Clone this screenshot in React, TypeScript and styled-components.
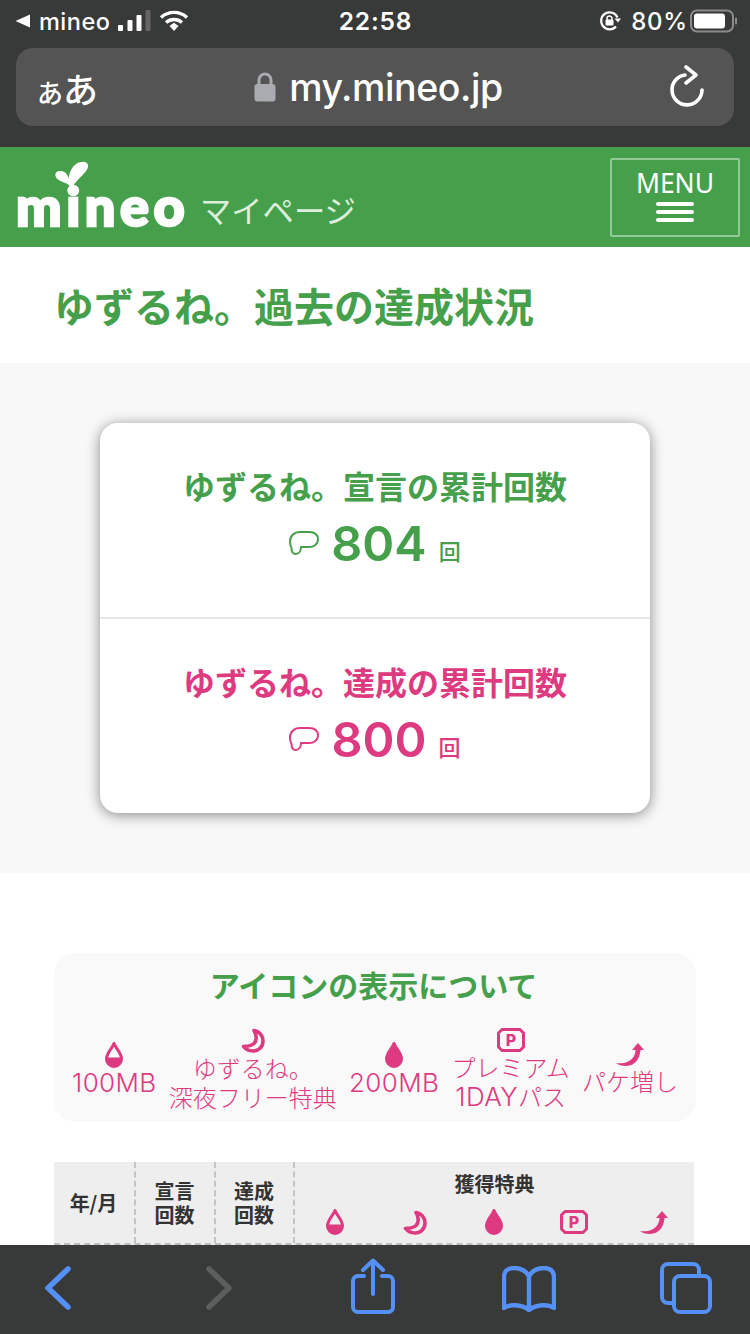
import React from "react";
import styled, { createGlobalStyle } from "styled-components";

const GREEN = "#46a04b";
const PINK = "#dd3a80";
const DARK = "#383939";
const BLUE = "#5591f5";
const JP = `"Noto Sans CJK JP", "Noto Sans", sans-serif`;
const LATIN = `Inter, "Noto Sans CJK JP", sans-serif`;

const Global = createGlobalStyle`
  html, body { margin: 0; padding: 0; background: #fff; }
  body { font-family: ${JP}; width: 750px; height: 1334px; overflow: hidden; }
  * { box-sizing: border-box; }
`;

const Page = styled.div`
  width: 750px;
  height: 1334px;
  overflow: hidden;
`;
const Chrome = styled.div`
  background: ${DARK};
  height: 147px;
  color: #fff;
`;
const StatusBar = styled.div`
  height: 48px;
  padding: 0 12px 6px 15px;
  display: flex;
  align-items: center;
  justify-content: space-between;
  font-family: ${LATIN};
`;
const StatusSide = styled.div<{ $end?: boolean }>`
  flex: 1;
  display: flex;
  align-items: center;
  justify-content: ${(p) => (p.$end ? "flex-end" : "flex-start")};
  gap: 8px;
`;
const Carrier = styled.span`
  font-size: 23.5px;
  font-weight: 500;
  letter-spacing: 0.5px;
`;
const Clock = styled.span`
  font-size: 24.5px;
  font-weight: 600;
  letter-spacing: 0.8px;
  margin-left: -2px;
`;
const Percent = styled.span`
  font-size: 24px;
  font-weight: 500;
  letter-spacing: 0.8px;
  margin: 0 -6px 0 2px;
`;
const AddressBar = styled.div`
  margin: 0 16px;
  height: 78px;
  background: #535453;
  border-radius: 17px;
  display: flex;
  align-items: center;
  justify-content: space-between;
  padding: 0 29px 0 21px;
`;
const TextSize = styled.span`
  font-family: ${JP};
  font-size: 35px;
  font-weight: 500;
  display: flex;
  align-items: baseline;
  color: #fff;
  small { font-size: 26px; font-weight: 500; }
`;
const Url = styled.div`
  display: flex;
  align-items: center;
  gap: 13px;
  font-family: ${LATIN};
  font-size: 37.5px;
  font-weight: 500;
  letter-spacing: -0.4px;
  color: #fff;
  margin-right: 10px;
`;
const Header = styled.header`
  height: 100px;
  background: ${GREEN};
  display: flex;
  justify-content: space-between;
  padding: 11px 10px 0 16px;
`;
const Brand = styled.div`
  display: flex;
  align-items: flex-end;
  gap: 16px;
  height: 74px;
`;
const Logo = styled.div`
  position: relative;
  width: 168px;
  height: 48px;
  margin-bottom: 3px;
  display: flex;
  align-items: flex-end;
  color: #fff;
  font-family: Lato, Inter, sans-serif;
  font-size: 54px;
  font-weight: 900;
  line-height: 46px;
  letter-spacing: 4.6px;
  -webkit-text-stroke: 2.5px #fff;
`;
const Sprout = styled.svg`
  position: absolute;
  left: 38px;
  top: -21px;
`;
const MyPage = styled.span`
  font-size: 31.3px;
  font-weight: 400;
  line-height: 42px;
  color: #dcefdc;
  margin-bottom: 1px;
`;
const MenuButton = styled.div`
  width: 130px;
  height: 79px;
  border: 2px solid #93ca95;
  border-radius: 2px;
  color: #fff;
  display: flex;
  flex-direction: column;
  align-items: center;
  padding-top: 6px;
`;
const MenuLabel = styled.span`
  font-family: "Noto Sans", sans-serif;
  font-size: 26.5px;
  line-height: 34px;
  letter-spacing: -0.1px;
`;
const Burger = styled.div`
  margin-top: 2px;
  display: flex;
  flex-direction: column;
  gap: 4px;
`;
const BurgerLine = styled.i`
  display: block;
  width: 38px;
  height: 4px;
  border-radius: 2px;
  background: #fff;
`;
const PageTitle = styled.h1`
  margin: 0;
  height: 116px;
  display: flex;
  align-items: center;
  padding: 0 0 0 54px;
  font-size: 40px;
  font-weight: 700;
  color: ${GREEN};
`;
const Band = styled.section`
  height: 510px;
  background: #f8f8f8;
  padding-top: 60px;
`;
const Card = styled.div`
  width: 550px;
  height: 390px;
  margin: 0 auto;
  background: #fff;
  border-radius: 18px;
  box-shadow: 0 2px 14px rgba(0, 0, 0, 0.45);
  overflow: hidden;
`;
const Tally = styled.div<{ $color: string; $divided?: boolean }>`
  height: ${(p) => (p.$divided ? 196 : 194)}px;
  padding-top: 42px;
  color: ${(p) => p.$color};
  display: flex;
  flex-direction: column;
  align-items: center;
  gap: 8px;
  border-bottom: ${(p) => (p.$divided ? "2px solid #e6e6e6" : "none")};
`;
const TallyLabel = styled.div`
  font-size: 32px;
  font-weight: 700;
  line-height: 40px;
`;
const TallyValue = styled.div`
  display: flex;
  align-items: center;
  height: 60px;
`;
const TallyNumber = styled.span`
  font-family: ${LATIN};
  font-size: 48.5px;
  font-weight: 600;
  margin: 0 12px 0 12px;
`;
const TallyUnit = styled.span`
  font-size: 22px;
  font-weight: 500;
  margin-top: 14px;
`;
const Legend = styled.section`
  width: 642px;
  height: 169px;
  margin: 80px 0 0 54px;
  padding: 11px 18px 0;
  background: #f9f9f9;
  border-radius: 22px;
`;
const LegendTitle = styled.h2`
  margin: 0 0 23px;
  padding-right: 3px;
  font-size: 30px;
  font-weight: 700;
  line-height: 40px;
  text-align: center;
  color: ${GREEN};
`;
const LegendRow = styled.div`
  display: flex;
  align-items: center;
  justify-content: space-between;
  height: 84px;
`;
const LegendItem = styled.div`
  display: flex;
  flex-direction: column;
  align-items: center;
  color: ${PINK};
  font-family: ${JP};
  font-size: 24px;
  font-weight: 300;
  line-height: 29px;
  text-align: center;
`;
const LegendText = styled.span`
  display: block;
`;
const LegendLatin = styled.span`
  font-family: ${LATIN};
  font-size: 26px;
  letter-spacing: 0.4px;
`;
const Table = styled.div`
  width: 640px;
  height: 83px;
  margin: 40px 0 0 54px;
  background: #eee;
  display: grid;
  grid-template-columns: 82px 80px 79px 399px;
  border-bottom: 2px dashed #bdbdbd;
  color: #333;
  font-size: 20px;
  font-weight: 700;
  line-height: 24px;
`;
const HeadCell = styled.div`
  display: flex;
  flex-direction: column;
  align-items: center;
  justify-content: center;
  padding-right: 1px;
  text-align: center;
  border-right: 2px dashed #c4c4c4;
`;
const BenefitCell = styled.div`
  display: flex;
  flex-direction: column;
  align-items: center;
  padding-top: 10px;
`;
const BenefitIcons = styled.div`
  width: 100%;
  margin-top: 11px;
  display: grid;
  grid-template-columns: repeat(5, 1fr);
  justify-items: center;
  align-items: center;
  height: 30px;
`;
const Toolbar = styled.nav`
  position: fixed;
  left: 0;
  bottom: 0;
  width: 750px;
  height: 89px;
  background: ${DARK};
  display: grid;
  grid-template-columns: 116px 206px 102px 210px 104px;
  justify-items: center;
  align-items: start;
`;
const ToolButton = styled.div<{ $top: number }>`
  margin-top: ${(p) => p.$top}px;
  display: flex;
`;

const Drop = ({ half, size = 26 }: { half?: boolean; size?: number }) => (
  <svg width={(size * 18) / 26} height={size} viewBox="0 0 18 26">
    <path
      d="M9 1.5C7.6 6 1.5 10.5 1.5 17A7.5 7.5 0 0 0 16.5 17C16.5 10.5 10.4 6 9 1.5Z"
      fill={half ? "none" : PINK}
      stroke={PINK}
      strokeWidth="3"
      strokeLinejoin="round"
    />
    {half && <path d="M1.1 15.5H16.9A8 8 0 1 1 1.1 15.5Z" fill={PINK} />}
  </svg>
);
const Moon = () => (
  <svg width="24" height="25" viewBox="0 0 24 25">
    <path
      d="M13 2.500C18 3 22 7.500 22 13C22 19 17.500 23 12 23C8 23 4.500 21 2.500 18.500C3.500 18 9 19 13 15.500C16 12.500 16 7 13 2.500Z"
      fill="none"
      stroke={PINK}
      strokeWidth="3.600"
      strokeLinejoin="round"
    />
  </svg>
);
const Ticket = () => (
  <svg width="28" height="24" viewBox="0 0 28 24">
    <path
      d="M5 1.500H23L26.500 5V19L23 22.500H5L1.500 19V5Z"
      fill="none"
      stroke={PINK}
      strokeWidth="3"
      strokeLinejoin="round"
    />
    <text x="14" y="18" textAnchor="middle" fontFamily="Inter, sans-serif" fontWeight="800" fontSize="16" fill={PINK}>
      P
    </text>
  </svg>
);
const Swoosh = () => (
  <svg width="28" height="23" viewBox="0 0 28 23">
    <path
      d="M22 0L28 7H24.500C24 14 20 23 10 23C6 23 2 22 0 20C6 21 14 20 18 13C19 11 19.500 9 19.500 7H16Z"
      fill={PINK}
    />
  </svg>
);
const Bubble = () => (
  <svg width="30" height="24" viewBox="0 0 30 24">
    <path
      d="M11 1H20C26 1 29 4 29 8.500C29 13 25 16 20 16H12C12 20 10 23 6.500 23C3.500 23 2.500 20 2.500 17C1.500 15 1 13 1 10.500C1 5 5 1 11 1Z"
      fill="none"
      stroke="currentColor"
      strokeWidth="2"
      strokeLinejoin="round"
    />
  </svg>
);

const StatusIcons = {
  Back: () => (
    <svg width="16" height="14" viewBox="0 0 16 14">
      <path d="M15 0.500V13.500L0.500 7Z" fill="#fff" />
    </svg>
  ),
  Signal: () => (
    <svg width="33" height="22" viewBox="0 0 33 22">
      <rect x="0" y="15" width="5" height="6" rx="1" fill="#fff" />
      <rect x="9.500" y="10" width="5" height="11" rx="1" fill="#fff" />
      <rect x="18.500" y="5" width="5" height="16" rx="1" fill="#fff" />
      <rect x="27.500" y="0" width="5" height="21" rx="1" fill="#666" />
    </svg>
  ),
  Wifi: () => (
    <svg width="30" height="22" viewBox="0 0 30 22">
      <path d="M2 7.500C9.500 0.700 20.500 0.700 28 7.500" fill="none" stroke="#fff" strokeWidth="3.400" />
      <path d="M7 12.500C11.500 8.500 18.500 8.500 23 12.500" fill="none" stroke="#fff" strokeWidth="3.400" />
      <path d="M10.500 16L15 12.800L19.500 16L15 21Z" fill="#fff" />
    </svg>
  ),
  Rotation: () => (
    <svg width="22" height="22" viewBox="0 0 22 22">
      <path d="M17 16.500A8.500 8.500 0 1 1 18.500 7.500" fill="none" stroke="#fff" strokeWidth="2.200" />
      <path d="M15.500 8.500H22L19 12.500Z" fill="#fff" />
      <rect x="6.500" y="9.500" width="8" height="6" rx="1" fill="#fff" />
      <path d="M8 10V8.500A2.500 2.500 0 0 1 13 8.500V10" fill="none" stroke="#fff" strokeWidth="1.500" />
    </svg>
  ),
  Battery: () => (
    <svg width="48" height="24" viewBox="0 0 48 24">
      <rect x="1" y="1.500" width="42" height="21" rx="6" fill="none" stroke="#8a8a8a" strokeWidth="2" />
      <rect x="4" y="4.500" width="31" height="15" rx="3" fill="#fff" />
      <rect x="45" y="8.500" width="2" height="7" rx="1" fill="#8a8a8a" />
    </svg>
  ),
};

const Lock = () => (
  <svg width="22" height="30" viewBox="0 0 22 30">
    <path d="M5 13V8A6 6 0 0 1 17 8V13" fill="none" stroke="#a9abb0" strokeWidth="3" />
    <rect x="0.500" y="12" width="21" height="17.500" rx="3" fill="#a9abb0" />
  </svg>
);
const Reload = () => (
  <svg width="36" height="44" viewBox="0 0 36 44">
    <path d="M16 10A15 15 0 1 0 33 25" fill="none" stroke="#fff" strokeWidth="3.600" strokeLinecap="round" />
    <path d="M17 2L27 10L17 18" fill="none" stroke="#fff" strokeWidth="3.600" strokeLinecap="round" strokeLinejoin="round" />
  </svg>
);

const Tool = {
  Back: () => (
    <svg width="28" height="46" viewBox="0 0 28 46">
      <path d="M24 4L4 23L24 42" fill="none" stroke={BLUE} strokeWidth="5.500" strokeLinecap="round" strokeLinejoin="round" />
    </svg>
  ),
  Forward: () => (
    <svg width="28" height="46" viewBox="0 0 28 46">
      <path d="M4 4L24 23L4 42" fill="none" stroke="#5c5d5d" strokeWidth="5.500" strokeLinecap="round" strokeLinejoin="round" />
    </svg>
  ),
  Share: () => (
    <svg width="44" height="56" viewBox="0 0 44 56">
      <path d="M13 18H7A5 5 0 0 0 2 23V49A5 5 0 0 0 7 54H37A5 5 0 0 0 42 49V23A5 5 0 0 0 37 18H31" fill="none" stroke={BLUE} strokeWidth="4" strokeLinecap="round" />
      <path d="M22 36V3M12 12L22 2.500L32 12" fill="none" stroke={BLUE} strokeWidth="4" strokeLinecap="round" strokeLinejoin="round" />
    </svg>
  ),
  Book: () => (
    <svg width="54" height="46" viewBox="0 0 54 46">
      <path
        d="M27 10C24 5 19 2 12 2C6 2 2 5 2 11V42C8 38 19 38 27 44C35 38 46 38 52 42V11C52 5 48 2 42 2C35 2 30 5 27 10ZM27 10V42"
        fill="none"
        stroke={BLUE}
        strokeWidth="4.400"
        strokeLinejoin="round"
      />
    </svg>
  ),
  Tabs: () => (
    <svg width="52" height="52" viewBox="0 0 52 52">
      <path d="M12 41H8A6 6 0 0 1 2 35V8A6 6 0 0 1 8 2H33A6 6 0 0 1 39 8V14" fill="none" stroke={BLUE} strokeWidth="4" />
      <rect x="14" y="14" width="36" height="36" rx="6" fill="none" stroke={BLUE} strokeWidth="4" />
    </svg>
  ),
};

const Sprig = () => (
  <Sprout width="36" height="30" viewBox="0 0 36 30">
    <path d="M16 26C13 22 3 22 1.500 16C0.500 12 5 10 9 11.500C14 13 16 20 16 26Z" fill="#fff" />
    <path d="M17 29C13 22 14 10 22 4C27 1 33 1 34 5C35 12 24 17 17 29Z" fill="#fff" />
  </Sprout>
);

export default function App() {
  return (
    <Page>
      <Global />
      <Chrome>
        <StatusBar>
          <StatusSide>
            <StatusIcons.Back />
            <Carrier>mineo</Carrier>
            <StatusIcons.Signal />
            <StatusIcons.Wifi />
          </StatusSide>
          <Clock>22:58</Clock>
          <StatusSide $end>
            <StatusIcons.Rotation />
            <Percent>80%</Percent>
            <StatusIcons.Battery />
          </StatusSide>
        </StatusBar>
        <AddressBar>
          <TextSize>
            <small>あ</small>あ
          </TextSize>
          <Url>
            <Lock />
            my.mineo.jp
          </Url>
          <Reload />
        </AddressBar>
      </Chrome>
      <Header>
        <Brand>
          <Logo>
            <Sprig />
            mineo
          </Logo>
          <MyPage>マイページ</MyPage>
        </Brand>
        <MenuButton>
          <MenuLabel>MENU</MenuLabel>
          <Burger>
            <BurgerLine />
            <BurgerLine />
            <BurgerLine />
          </Burger>
        </MenuButton>
      </Header>
      <PageTitle>ゆずるね。過去の達成状況</PageTitle>
      <Band>
        <Card>
          <Tally $color={GREEN} $divided>
            <TallyLabel>ゆずるね。宣言の累計回数</TallyLabel>
            <TallyValue>
              <Bubble />
              <TallyNumber>804</TallyNumber>
              <TallyUnit>回</TallyUnit>
            </TallyValue>
          </Tally>
          <Tally $color={PINK}>
            <TallyLabel>ゆずるね。達成の累計回数</TallyLabel>
            <TallyValue>
              <Bubble />
              <TallyNumber>800</TallyNumber>
              <TallyUnit>回</TallyUnit>
            </TallyValue>
          </Tally>
        </Card>
      </Band>
      <Legend>
        <LegendTitle>アイコンの表示について</LegendTitle>
        <LegendRow>
          <LegendItem>
            <Drop half />
            <LegendLatin>100MB</LegendLatin>
          </LegendItem>
          <LegendItem>
            <Moon />
            <LegendText>ゆずるね。</LegendText>
            <LegendText>深夜フリー特典</LegendText>
          </LegendItem>
          <LegendItem>
            <Drop />
            <LegendLatin>200MB</LegendLatin>
          </LegendItem>
          <LegendItem>
            <Ticket />
            <LegendText>プレミアム</LegendText>
            <LegendText>
              <LegendLatin>1DAY</LegendLatin>パス
            </LegendText>
          </LegendItem>
          <LegendItem>
            <Swoosh />
            <LegendText>パケ増し</LegendText>
          </LegendItem>
        </LegendRow>
      </Legend>
      <Table>
        <HeadCell>年/月</HeadCell>
        <HeadCell>
          <span>宣言</span>
          <span>回数</span>
        </HeadCell>
        <HeadCell>
          <span>達成</span>
          <span>回数</span>
        </HeadCell>
        <BenefitCell>
          獲得特典
          <BenefitIcons>
            <Drop half />
            <Moon />
            <Drop />
            <Ticket />
            <Swoosh />
          </BenefitIcons>
        </BenefitCell>
      </Table>
      <Toolbar>
        <ToolButton $top={20}>
          <Tool.Back />
        </ToolButton>
        <ToolButton $top={20}>
          <Tool.Forward />
        </ToolButton>
        <ToolButton $top={13}>
          <Tool.Share />
        </ToolButton>
        <ToolButton $top={21}>
          <Tool.Book />
        </ToolButton>
        <ToolButton $top={17}>
          <Tool.Tabs />
        </ToolButton>
      </Toolbar>
    </Page>
  );
}
